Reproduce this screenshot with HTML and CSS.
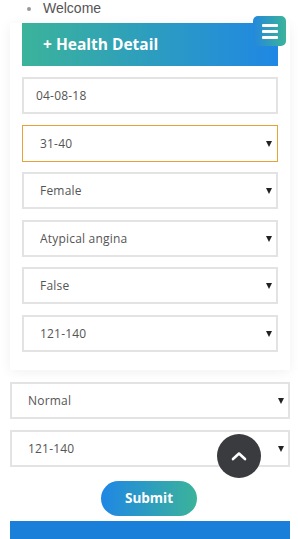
FILE: index.html
```html
<!DOCTYPE html>
<html lang="en">
<head>
  <meta charset="UTF-8" />
  <meta name="viewport" content="width=device-width, initial-scale=1.0"/>
  <title>Health Detail</title>
  <link rel="stylesheet" href="styles.css">
</head>
<body>
  <ul class="nav">
    <li>Welcome</li>
  </ul>

  <button class="menu-btn" type="button" aria-label="Menu">
    <span></span><span></span><span></span>
  </button>

  <div class="card">
    <h2 class="card-head">+ Health Detail</h2>
    <form class="fields">
      <input type="text" class="field" value="04-08-18" />
      <div class="select-wrap">
        <select class="field active"><option>31-40</option></select>
      </div>
      <div class="select-wrap">
        <select class="field"><option>Female</option></select>
      </div>
      <div class="select-wrap">
        <select class="field"><option>Atypical angina</option></select>
      </div>
      <div class="select-wrap">
        <select class="field"><option>False</option></select>
      </div>
      <div class="select-wrap">
        <select class="field"><option>121-140</option></select>
      </div>
    </form>
  </div>

  <div class="fields wide">
    <div class="select-wrap">
      <select class="field"><option>Normal</option></select>
    </div>
    <div class="select-wrap">
      <select class="field"><option>121-140</option></select>
    </div>
  </div>

  <div class="actions">
    <button type="button" class="btn-submit">Submit</button>
  </div>

  <div class="footer-bar"></div>

  <button class="to-top" type="button" aria-label="Back to top">
    <svg width="16" height="10" viewBox="0 0 16 10">
      <path d="M2 8 L8 2.5 L14 8" fill="none" stroke="#fff" stroke-width="2.6" stroke-linecap="round" stroke-linejoin="round"/>
    </svg>
  </button>
</body>
</html>
```

FILE: styles.css
```css
body {
  margin: 0;
  padding: 0;
  font-family: "Open Sans", "Noto Sans", sans-serif;
  background: #fff;
  position: relative;
  min-height: 539px;
  overflow: hidden;
}
.nav {
  margin: 0;
  padding: 0 0 0 43px;
  list-style: none;
}
.nav li {
  position: relative;
  font-family: "Liberation Sans", Arial, sans-serif;
  font-size: 14px;
  line-height: 17px;
  color: #555;
}
.nav li::before {
  content: "";
  position: absolute;
  left: -16px;
  top: 7px;
  width: 4px;
  height: 4px;
  border-radius: 50%;
  background: #999;
}
.menu-btn {
  position: absolute;
  left: 253px;
  top: 16px;
  width: 33px;
  height: 30px;
  border: none;
  border-radius: 5px;
  background: linear-gradient(to right, #2488dc, #3bb39a);
  display: flex;
  flex-direction: column;
  justify-content: center;
  align-items: center;
  gap: 3px;
  padding: 0;
  z-index: 2;
}
.menu-btn span {
  display: block;
  width: 16px;
  height: 3px;
  border-radius: 1px;
  background: #fff;
}
.card {
  margin: 6px 8px 0 10px;
  padding: 0 12px 18px;
  background: #fff;
  box-shadow: 0 2px 12px rgba(0, 0, 0, 0.06);
}
.card-head {
  margin: 0;
  height: 43px;
  line-height: 43px;
  padding-left: 21px;
  font-size: 15.5px;
  font-weight: 700;
  color: #fff;
  background: linear-gradient(to right, #3bb39a, #1f87e4);
}
.fields {
  display: flex;
  flex-direction: column;
  gap: 10.6px;
  margin: 0;
  padding-top: 11px;
}
.fields.wide {
  margin: 12px 8px 0 10px;
  padding-top: 0;
}
.field {
  box-sizing: border-box;
  width: 100%;
  height: 37px;
  margin: 0;
  padding: 0 12px;
  border: 2px solid #e3e3e3;
  border-radius: 0;
  background: #fff;
  font-family: "Open Sans", "Noto Sans", sans-serif;
  font-size: 12px;
  letter-spacing: 0.2px;
  color: #555;
  outline: none;
}
select.field {
  -webkit-appearance: none;
  appearance: none;
  padding-left: 16px;
}
.field.active {
  border: 1px solid #e8a337;
  padding-left: 17px;
}
.select-wrap {
  position: relative;
}
.select-wrap::after {
  content: "";
  position: absolute;
  right: 6px;
  top: 16px;
  border-left: 3px solid transparent;
  border-right: 3px solid transparent;
  border-top: 6px solid #222;
  pointer-events: none;
}
.actions {
  display: flex;
  justify-content: center;
  margin-top: 14px;
}
.btn-submit {
  width: 96px;
  height: 35px;
  border: none;
  border-radius: 18px;
  background: linear-gradient(to right, #1f87e4, #3bb39a);
  color: #fff;
  font-family: "Open Sans", "Noto Sans", sans-serif;
  font-size: 13.5px;
  font-weight: 700;
  cursor: pointer;
}
.footer-bar {
  margin: 5px 8px 0 10px;
  height: 30px;
  background: #1a7fd8;
}
.to-top {
  position: absolute;
  left: 217px;
  top: 434px;
  width: 44px;
  height: 44px;
  border: none;
  border-radius: 50%;
  background: #3a3b3f;
  display: flex;
  justify-content: center;
  align-items: center;
  padding: 0;
  z-index: 3;
}
```
